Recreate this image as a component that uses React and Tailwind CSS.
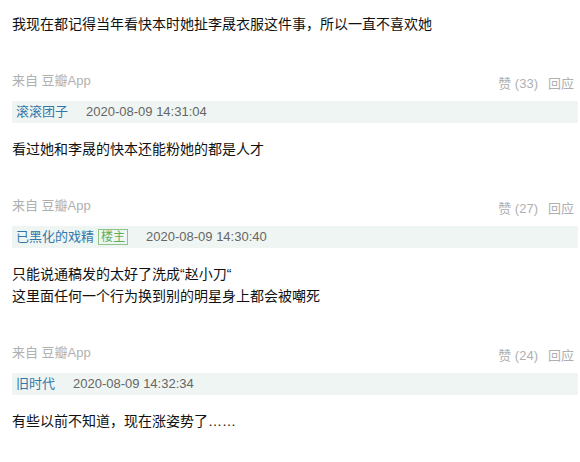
const comments = [
  {
    text: ["我现在都记得当年看快本时她扯李晟衣服这件事，所以一直不喜欢她"],
    likes: 33,
  },
  {
    user: "滚滚团子",
    time: "2020-08-09 14:31:04",
    text: ["看过她和李晟的快本还能粉她的都是人才"],
    likes: 27,
  },
  {
    user: "已黑化的戏精",
    author: true,
    time: "2020-08-09 14:30:40",
    text: ["只能说通稿发的太好了洗成“赵小刀“", "这里面任何一个行为换到别的明星身上都会被嘲死"],
    likes: 24,
  },
  {
    user: "旧时代",
    time: "2020-08-09 14:32:34",
    text: ["有些以前不知道，现在涨姿势了……"],
  },
];

function UserBar({ user, author, time }) {
  return (
    <div className="ml-3 mr-[2px] flex h-[22px] items-center bg-[#eff5f2] pl-1 text-[13px] leading-[22px]">
      <span className="text-[#3377aa]">{user}</span>
      {author && (
        <span className="ml-1 flex h-4 items-center border border-[#8cc785] px-[2px] text-[12px] leading-4 text-[#5fae58]">
          楼主
        </span>
      )}
      <span className="ml-[18px] text-[#666]">{time}</span>
    </div>
  );
}

function Meta({ likes }) {
  return (
    <div className="mt-9 flex h-5 items-start justify-between pl-3 pr-[6px] text-[13px] leading-5 text-[#b0b0b0]">
      <span>来自 豆瓣App</span>
      <span className="flex translate-y-[3px]">
        <span>赞 ({likes})</span>
        <span className="ml-[10px]">回应</span>
      </span>
    </div>
  );
}

export default function App() {
  return (
    <div
      className="h-[462px] w-[580px] overflow-hidden bg-white pt-[13px]"
      style={{ fontFamily: '"Liberation Sans", "Noto Sans CJK SC", sans-serif' }}
    >
      {comments.map((c, i) => (
        <div key={i} className={i > 0 ? "mt-[10px]" : ""}>
          {c.user && <UserBar user={c.user} author={c.author} time={c.time} />}
          <div className={"pl-3 text-[14px] leading-[22px] text-[#111]" + (c.user ? " mt-[15px]" : "")}>
            {c.text.map((line, j) => (
              <p key={j}>{line}</p>
            ))}
          </div>
          {c.likes && <Meta likes={c.likes} />}
        </div>
      ))}
    </div>
  );
}
